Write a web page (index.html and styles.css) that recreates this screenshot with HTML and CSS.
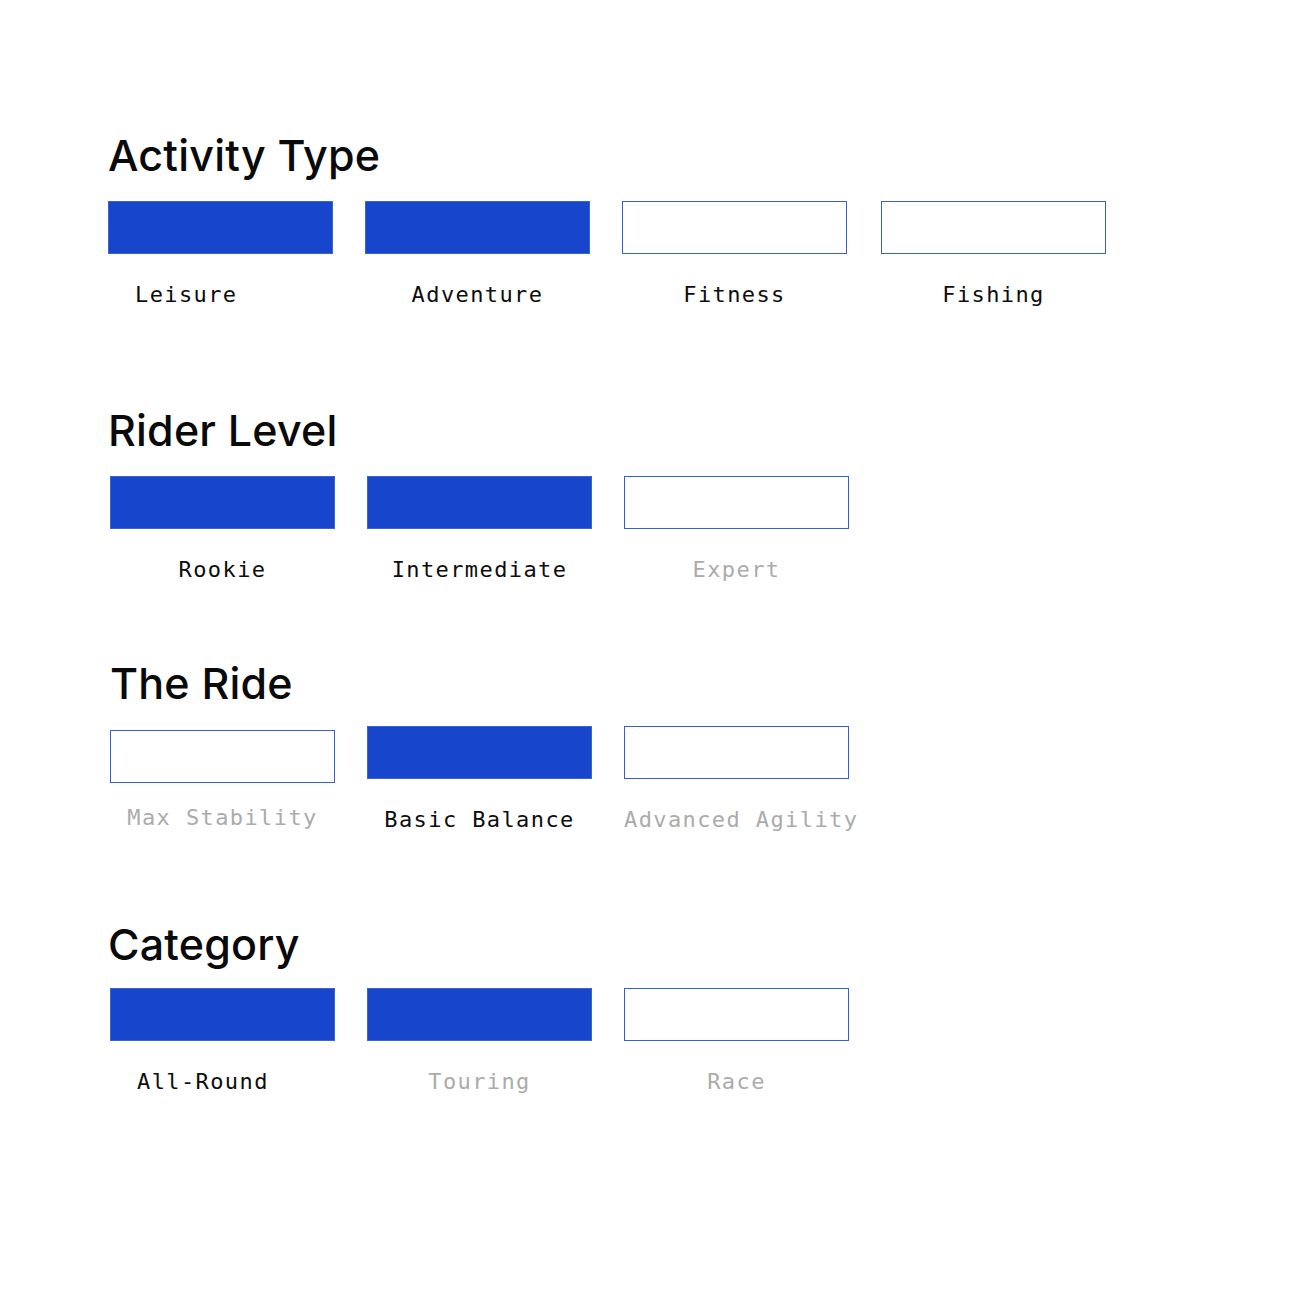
FILE: index.html
```html
<!DOCTYPE html>
<html lang="en">
<head>
<meta charset="utf-8">
<title>Filters</title>
<link rel="stylesheet" href="styles.css">
</head>
<body>
<main class="page">
  <section class="group group--activity">
    <h2 class="group__title">Activity Type</h2>
    <div class="options options--wide">
      <div class="option"><div class="swatch swatch--on"></div><span class="label label--start">Leisure</span></div>
      <div class="option"><div class="swatch swatch--on"></div><span class="label">Adventure</span></div>
      <div class="option"><div class="swatch"></div><span class="label">Fitness</span></div>
      <div class="option"><div class="swatch"></div><span class="label">Fishing</span></div>
    </div>
  </section>

  <section class="group group--level">
    <h2 class="group__title">Rider Level</h2>
    <div class="options">
      <div class="option"><div class="swatch swatch--on"></div><span class="label">Rookie</span></div>
      <div class="option"><div class="swatch swatch--on"></div><span class="label">Intermediate</span></div>
      <div class="option"><div class="swatch"></div><span class="label label--muted">Expert</span></div>
    </div>
  </section>

  <section class="group group--ride">
    <h2 class="group__title group__title--ride">The Ride</h2>
    <div class="options">
      <div class="option option--low"><div class="swatch"></div><span class="label label--muted label--up">Max Stability</span></div>
      <div class="option"><div class="swatch swatch--on"></div><span class="label">Basic Balance</span></div>
      <div class="option"><div class="swatch"></div><span class="label label--muted">Advanced Agility</span></div>
    </div>
  </section>

  <section class="group group--category">
    <h2 class="group__title">Category</h2>
    <div class="options">
      <div class="option"><div class="swatch swatch--on"></div><span class="label label--start">All-Round</span></div>
      <div class="option"><div class="swatch swatch--on"></div><span class="label label--muted">Touring</span></div>
      <div class="option"><div class="swatch"></div><span class="label label--muted">Race</span></div>
    </div>
  </section>
</main>
</body>
</html>
```

FILE: styles.css
```css
* { box-sizing: border-box; }

html, body {
  margin: 0;
  padding: 0;
  background: #ffffff;
}

.page {
  padding: 134px 0 0 110px;
  font-family: Inter, "Liberation Sans", sans-serif;
  color: #0d0d0d;
}

.group { display: flex; flex-direction: column; }
.group--level { margin-top: 102px; }
.group--ride { margin-top: 80px; }
.group--category { margin-top: 91px; }

.group__title {
  margin: 0 0 25px -2px;
  font-family: Inter, "Liberation Sans", sans-serif;
  font-size: 43px;
  line-height: 42px;
  font-weight: 500;
  letter-spacing: 0.2px;
  color: #0a0a0a;
}
.group__title--ride { margin-left: 0; margin-bottom: 22px; }
.group--category .group__title { margin-bottom: 23px; }

.options {
  display: flex;
  gap: 32px;
  align-items: flex-start;
}
.options--wide { margin-left: -2px; }
.options--wide .option:last-child { margin-left: 2px; }

.option {
  width: 225px;
  display: flex;
  flex-direction: column;
}
.option--low { margin-top: 4px; }

.swatch {
  height: 53px;
  border: 1px solid #3560da;
  background: #ffffff;
}
.swatch--on {
  background: #1745cb;
  border-color: #3b63d6;
}

.label {
  margin-top: 29px;
  height: 24px;
  line-height: 24px;
  font-family: "DejaVu Sans Mono", "Liberation Mono", monospace;
  font-size: 22px;
  letter-spacing: 1.4px;
  text-align: center;
  color: #0d0d0d;
  white-space: nowrap;
}
.label--muted { color: #ababab; }
.label--start { text-align: left; padding-left: 27px; }
.label--up { margin-top: 23px; }
```
